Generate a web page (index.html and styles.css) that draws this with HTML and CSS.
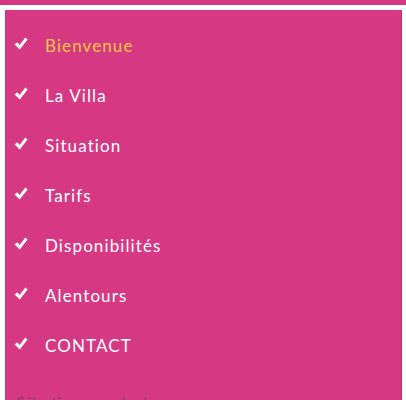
FILE: index.html
```html
<!DOCTYPE html>
<html lang="fr">
<head>
<meta charset="utf-8">
<link rel="stylesheet" href="styles.css">
</head>
<body>
<div class="topbar"></div>
<nav class="panel">
  <ul class="menu">
    <li class="item active"><svg class="check" viewBox="0 0 14 13"><path d="M0.6 7.4 L3.3 5.2 L5.6 8 L11.3 0.6 L13.6 2.5 L5.8 12.4 Z" fill="#fff"/></svg><span>Bienvenue</span></li>
    <li class="item"><svg class="check" viewBox="0 0 14 13"><path d="M0.6 7.4 L3.3 5.2 L5.6 8 L11.3 0.6 L13.6 2.5 L5.8 12.4 Z" fill="#fff"/></svg><span>La Villa</span></li>
    <li class="item"><svg class="check" viewBox="0 0 14 13"><path d="M0.6 7.4 L3.3 5.2 L5.6 8 L11.3 0.6 L13.6 2.5 L5.8 12.4 Z" fill="#fff"/></svg><span>Situation</span></li>
    <li class="item"><svg class="check" viewBox="0 0 14 13"><path d="M0.6 7.4 L3.3 5.2 L5.6 8 L11.3 0.6 L13.6 2.5 L5.8 12.4 Z" fill="#fff"/></svg><span>Tarifs</span></li>
    <li class="item"><svg class="check" viewBox="0 0 14 13"><path d="M0.6 7.4 L3.3 5.2 L5.6 8 L11.3 0.6 L13.6 2.5 L5.8 12.4 Z" fill="#fff"/></svg><span>Disponibilités</span></li>
    <li class="item"><svg class="check" viewBox="0 0 14 13"><path d="M0.6 7.4 L3.3 5.2 L5.6 8 L11.3 0.6 L13.6 2.5 L5.8 12.4 Z" fill="#fff"/></svg><span>Alentours</span></li>
    <li class="item"><svg class="check" viewBox="0 0 14 13"><path d="M0.6 7.4 L3.3 5.2 L5.6 8 L11.3 0.6 L13.6 2.5 L5.8 12.4 Z" fill="#fff"/></svg><span>CONTACT</span></li>
  </ul>
  <p class="lang">Sélectionnez votre langue</p>
</nav>
</body>
</html>
```
FILE: styles.css
```css
html, body {
  margin: 0;
  padding: 0;
  background: #fff;
  overflow: hidden;
}
body {
  font-family: Lato, "Open Sans", sans-serif;
}
.topbar {
  height: 5px;
  background: #d63884;
}
.panel {
  margin: 5px 0 0 5px;
  width: 397px;
  height: 400px;
  background: #d63884;
  border-right: 1px solid #c2336f;
  padding-top: 10px;
  box-sizing: border-box;
}
.menu {
  list-style: none;
  margin: 0;
  padding: 0;
}
.item {
  height: 50px;
  display: flex;
  align-items: center;
  padding-left: 9px;
  color: #fff;
  font-size: 17px;
  font-weight: 400;
  letter-spacing: 1.1px;
}
.item.active {
  color: #f9c73e;
}
.check {
  width: 14px;
  height: 13px;
  margin-right: 17px;
  margin-top: -3px;
  flex: none;
}
.lang {
  margin: 23px 0 0 11px;
  font-size: 15px;
  font-weight: bold;
  color: #9b3c69;
}
```
